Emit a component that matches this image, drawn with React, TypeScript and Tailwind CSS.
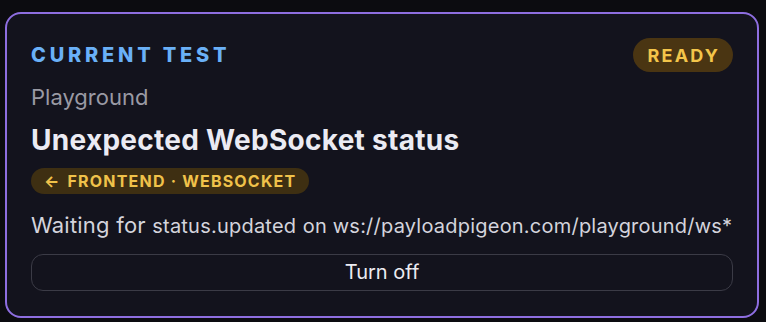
import React from 'react';

const App = () => {
  return (
    <div className="w-[766px] h-[322px] bg-[#0c0c10] pl-[5px] pr-[7px] pt-[12px] pb-[4px] font-['Inter',sans-serif]">
      <div className="h-full rounded-2xl border-2 border-[#8e6ee0] bg-[#13131d] px-6 pt-6 pb-[25px] flex flex-col">
        {/* Header */}
        <div className="flex items-center justify-between h-[34px]">
          <div className="text-[20px] leading-7 font-extrabold tracking-[0.19em] text-[#6ab0f7]">CURRENT TEST</div>
          <div className="h-[34px] pl-[15px] pr-[13px] rounded-full bg-[#4a3512] flex items-center text-[18px] font-bold tracking-[0.12em] text-[#f3c54a]">
            READY
          </div>
        </div>

        <div className="mt-[11px] text-[22px] leading-7 text-[#9a9aa4]">Playground</div>

        <h1 className="mt-[13px] text-[28px] leading-8 font-bold tracking-[0.01em] text-[#ebebf3]">Unexpected WebSocket status</h1>

        <div className="mt-3 self-start h-[26px] pl-[13px] pr-[13px] rounded-full bg-[#3e2f12] flex items-center gap-[7px] text-[16px] font-bold tracking-[0.075em] text-[#f0c24a]">
          <span>←</span>
          <span>FRONTEND · WEBSOCKET</span>
        </div>

        <p className="mt-[17px] text-[22px] leading-7 tracking-[0.01em] text-[#d4d4dc]">
          Waiting for <span className="text-[20px]">status.updated</span>{' '}
          <span className="text-[20px]">on ws://payloadpigeon.com/playground/ws*</span>
        </p>

        <button className="mt-[14px] h-[38px] w-full rounded-xl border border-[#3b3b46] text-[20px] text-[#ececf2]">
          Turn off
        </button>
      </div>
    </div>
  );
};

export default App;
